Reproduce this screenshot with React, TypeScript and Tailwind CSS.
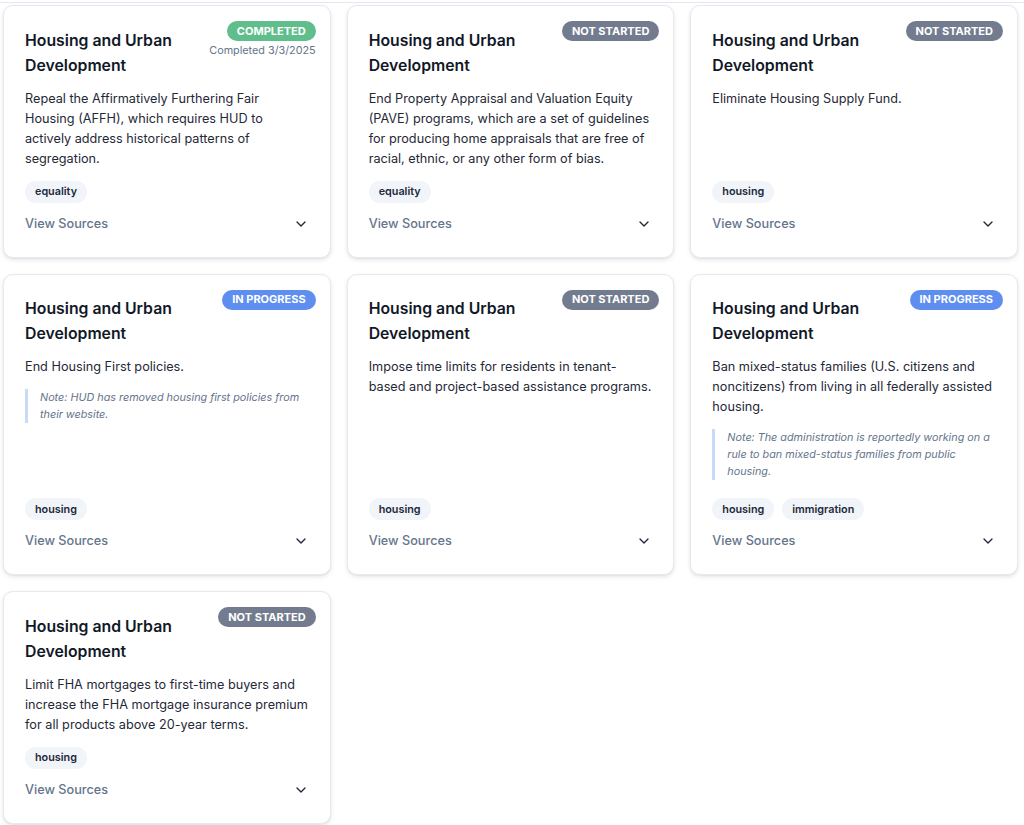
import React from "react";
import { ChevronDown } from "lucide-react";

type Status = "completed" | "not_started" | "in_progress";

interface Item {
  status: Status;
  completed?: string;
  text: string;
  note?: string;
  tags: string[];
}

const items: Item[] = [
  {
    status: "completed",
    completed: "Completed 3/3/2025",
    text: "Repeal the Affirmatively Furthering Fair Housing (AFFH), which requires HUD to actively address historical patterns of segregation.",
    tags: ["equality"],
  },
  {
    status: "not_started",
    text: "End Property Appraisal and Valuation Equity (PAVE) programs, which are a set of guidelines for producing home appraisals that are free of racial, ethnic, or any other form of bias.",
    tags: ["equality"],
  },
  {
    status: "not_started",
    text: "Eliminate Housing Supply Fund.",
    tags: ["housing"],
  },
  {
    status: "in_progress",
    text: "End Housing First policies.",
    note: "Note: HUD has removed housing first policies from their website.",
    tags: ["housing"],
  },
  {
    status: "not_started",
    text: "Impose time limits for residents in tenant-based and project-based assistance programs.",
    tags: ["housing"],
  },
  {
    status: "in_progress",
    text: "Ban mixed-status families (U.S. citizens and noncitizens) from living in all federally assisted housing.",
    note: "Note: The administration is reportedly working on a rule to ban mixed-status families from public housing.",
    tags: ["housing", "immigration"],
  },
  {
    status: "not_started",
    text: "Limit FHA mortgages to first-time buyers and increase the FHA mortgage insurance premium for all products above 20-year terms.",
    tags: ["housing"],
  },
];

function Badge({ status }: { status: Status }) {
  if (status === "completed")
    return (
      <span className="inline-flex h-5 items-center rounded-full bg-[#5fbe8c] px-[10px] text-[11px] font-bold leading-none text-white">
        COMPLETED
      </span>
    );
  if (status === "in_progress")
    return (
      <span className="inline-flex h-5 items-center rounded-full bg-[#5d8ef0] px-[10px] text-[11px] font-bold leading-none text-white">
        IN PROGRESS
      </span>
    );
  return (
    <span className="inline-flex h-5 items-center rounded-full bg-[#737c8f] px-[10px] text-[11px] font-bold leading-none text-white">
      NOT STARTED
    </span>
  );
}

function Card({ item }: { item: Item }) {
  return (
    <div className="flex flex-col rounded-[10px] border border-[#e5e9f0] bg-white px-[21px] pb-[19px] pt-[21.5px] shadow-[0_2px_5px_rgba(15,23,42,0.09),0_1px_2px_rgba(15,23,42,0.06)]">
      <div className="flex items-start justify-between gap-3">
        <h3 className="text-[15.8px] font-semibold leading-[25px] text-[#111827]">
          Housing and Urban Development
        </h3>
        <div className="-mr-[7px] -mt-[6.5px] flex shrink-0 flex-col items-end">
          <Badge status={item.status} />
          {item.completed && (
            <span className="mt-[2px] text-[10.8px] leading-4 text-[#64748b]">
              {item.completed}
            </span>
          )}
        </div>
      </div>
      <p className="mt-[11px] text-[12.7px] leading-5 text-[#1f2937]">{item.text}</p>
      {item.note && (
        <div className="mb-1.5 mt-3 border-l-[3px] border-[#c9daf8] pl-3 text-[10.8px] italic leading-[17px] text-[#64748b]">
          {item.note}
        </div>
      )}
      <div className="mt-auto pt-3">
        <div className="flex flex-wrap gap-2">
          {item.tags.map((t) => (
            <span
              key={t}
              className="rounded-full bg-[#f1f5f9] px-[10px] py-[3.5px] text-[10.8px] font-semibold leading-[15px] text-[#1e293b]"
            >
              {t}
            </span>
          ))}
        </div>
        <button className="mt-[7px] flex w-full items-center justify-between py-1 text-left text-[12.7px] font-medium leading-5 text-[#64748b]">
          <span>View Sources</span>
          <ChevronDown size={16} strokeWidth={2} className="text-[#1e293b]" />
        </button>
      </div>
    </div>
  );
}

export default function App() {
  return (
    <div
      className="min-h-[825px] bg-white"
      style={{ fontFamily: "Inter, 'Noto Sans', sans-serif" }}
    >
      <div className="h-[3px] border-b border-[#e2e8f0]" />
      <div className="ml-[3px] mt-[2px] grid w-[1015px] grid-cols-3 gap-4">
        {items.map((it, i) => (
          <Card key={i} item={it} />
        ))}
      </div>
    </div>
  );
}
